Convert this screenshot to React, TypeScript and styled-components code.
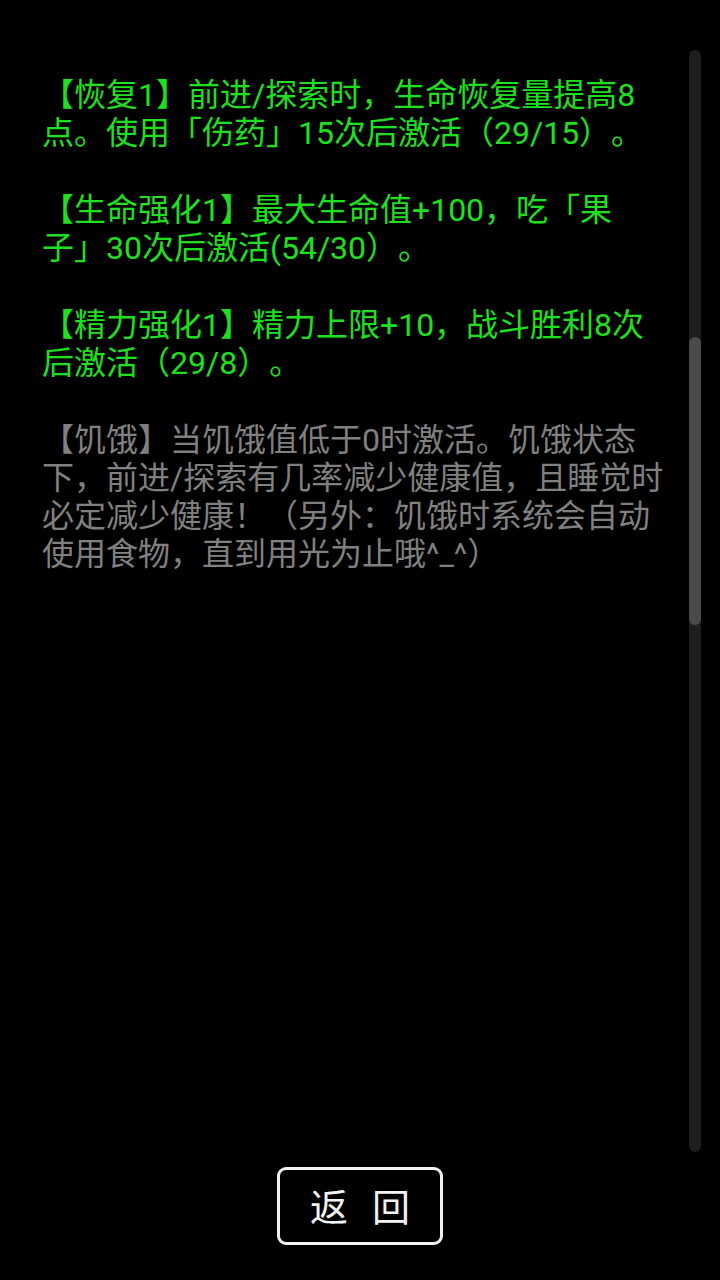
import React from "react";
import styled, { createGlobalStyle } from "styled-components";

const Global = createGlobalStyle`
  html, body { margin: 0; padding: 0; background: #000; }
  body { font-family: Roboto, "Noto Sans CJK SC", sans-serif; }
`;

const Page = styled.div`
  width: 720px;
  height: 1280px;
  background: #000;
  display: flex;
  flex-direction: column;
  overflow: hidden;
`;

const Main = styled.div`
  height: 1152px;
  display: flex;
  flex-direction: row;
`;

const Content = styled.div`
  width: 622px;
  padding: 76px 0 0 42px;
  display: flex;
  flex-direction: column;
  gap: 39px;
`;

const Para = styled.p<{ $dim?: boolean }>`
  margin: 0;
  font-family: Roboto, "Noto Sans CJK SC", sans-serif;
  font-size: 32px;
  line-height: 38px;
  color: ${(p) => (p.$dim ? "#808080" : "#1fe01f")};
  word-break: break-all;
  text-spacing-trim: space-all;
`;

const Rail = styled.div`
  margin-left: 25px;
  padding-top: 50px;
  display: flex;
  flex-direction: column;
`;

const Track = styled.div`
  width: 12px;
  height: 1102px;
  border-radius: 6px;
  background: #1e1e1e;
  padding-top: 287px;
  box-sizing: border-box;
`;

const Thumb = styled.div`
  width: 12px;
  height: 288px;
  border-radius: 6px;
  background: #4a4a4a;
`;

const Footer = styled.div`
  display: flex;
  justify-content: center;
  padding-top: 15px;
`;

const BackButton = styled.button`
  width: 166px;
  height: 78px;
  box-sizing: border-box;
  background: #000;
  border: 3px solid #f2f2f2;
  border-radius: 9px;
  display: flex;
  align-items: center;
  justify-content: center;
  gap: 24px;
  color: #f2f2f2;
  font-family: "Noto Sans CJK SC", sans-serif;
  font-size: 38px;
  padding: 0 0 4px 0;
  cursor: pointer;
`;

export default function App() {
  return (
    <>
      <Global />
      <Page>
        <Main>
          <Content>
            <Para>【恢复1】前进/探索时，生命恢复量提高8点。使用「伤药」15次后激活（29/15）。</Para>
            <Para>【生命强化1】最大生命值+100，吃「果子」30次后激活(54/30）。</Para>
            <Para>【精力强化1】精力上限+10，战斗胜利8次后激活（29/8）。</Para>
            <Para $dim>【饥饿】当饥饿值低于0时激活。饥饿状态下，前进/探索有几率减少健康值，且睡觉时必定减少健康！（另外：饥饿时系统会自动使用食物，直到用光为止哦^_^）</Para>
          </Content>
          <Rail>
            <Track>
              <Thumb />
            </Track>
          </Rail>
        </Main>
        <Footer>
          <BackButton>
            <span>返</span>
            <span>回</span>
          </BackButton>
        </Footer>
      </Page>
    </>
  );
}
